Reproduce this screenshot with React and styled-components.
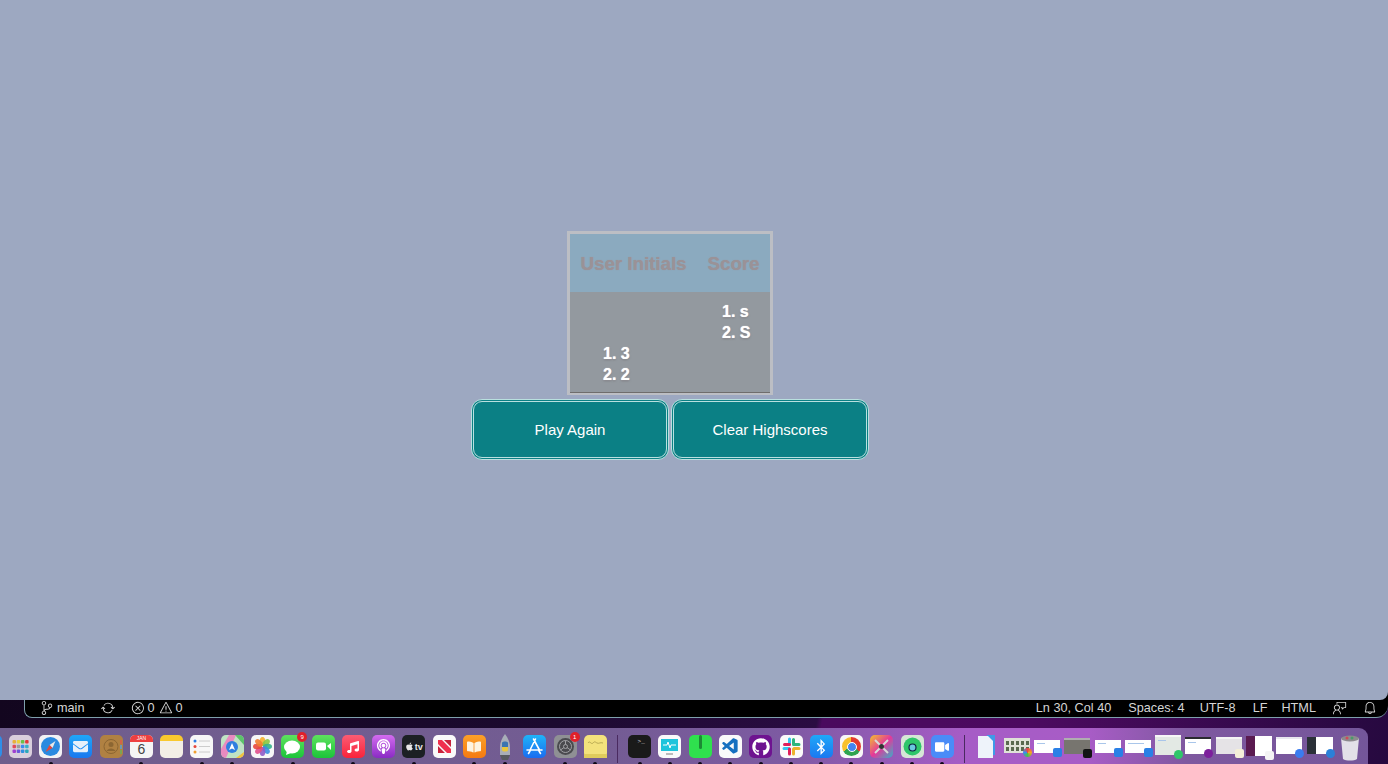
import React from 'react';
import styled, { createGlobalStyle } from 'styled-components';
import { VscSourceControl, VscSync, VscError, VscWarning, VscFeedback, VscBell, VscVscode } from 'react-icons/vsc';
import { FaGithub, FaBluetoothB, FaVideo, FaPodcast, FaApple, FaMusic, FaBookOpen, FaEnvelope } from 'react-icons/fa';

const GlobalStyle = createGlobalStyle`
html, body {
  margin: 0;
  height: 100%;
  overflow: hidden;
  background: #000;
  font-family: "Liberation Sans", Arial, sans-serif;
}
`
const Screen = styled.div`
display: flex;
flex-direction: column;
width: 1388px;
height: 764px;
overflow: hidden;
`
const Stage = styled.main`
display: flex;
flex-direction: column;
align-items: center;
flex: none;
box-sizing: border-box;
height: 700px;
padding: 231px 48px 0 0;
border-radius: 0 0 8px 0;
background: #9da8c1;
`
const Card = styled.div`
box-sizing: border-box;
width: 206px;
height: 164px;
margin-bottom: 4px;
border: 3px solid #bcbec4;
background: #93999f;
`
const ScoreHead = styled.div`
display: grid;
grid-template-columns: 127px 73px;
align-items: center;
box-sizing: border-box;
height: 58px;
padding-top: 2px;
background: #8baabf;
`
const HeadCell = styled.h3`
margin: 0;
font-size: 18.72px;
font-weight: bold;
text-align: center;
color: #9a9297;
text-shadow: 0 0 1px #9a9297;
`
const ScoreBody = styled.div`
display: grid;
grid-template-columns: 127px 73px;
align-content: start;
row-gap: 1px;
box-sizing: border-box;
height: 101px;
padding-top: 10px;
border-bottom: 1px solid #6f6d6c;
`
const ScoreList = styled.ol`
grid-column: ${p => p.$column};
margin: 0;
padding: 0 0 0 ${p => p.$indent}px;
list-style-position: inside;
font-size: 16px;
font-weight: bold;
line-height: 20.6px;
color: #fff;
text-shadow: 0 0 1px #fff, 0 1px 2px #77757a;
`
const ButtonRow = styled.div`
display: flex;
gap: 2px;
`
const ActionButton = styled.button`
box-sizing: border-box;
width: 198px;
height: 61px;
border: 3px double #b9e0df;
border-radius: 11px;
background: #0b8085;
color: #fff;
font-family: inherit;
font-size: 15px;
`
const Footer = styled.div`
display: flex;
flex-direction: column;
flex: 1;
background: linear-gradient(102deg, #13061f 0, #1c0a30 40%, #2a0c42 58.6%, #4a0a5e 59%, #4c0a60 74%, #26093f 100%);
`
const StatusBar = styled.footer`
display: flex;
justify-content: space-between;
align-items: center;
flex: none;
box-sizing: border-box;
height: 18px;
margin-left: 24px;
padding: 0 11px 1px 15px;
border: solid #7ea0ac;
border-width: 0 0 1px 1px;
border-radius: 0 0 12px 8px;
background: #000;
color: #d6d6d6;
font-size: 12.7px;
`
const StatusGroup = styled.div`
display: flex;
align-items: center;
`
const StatusItem = styled.span`
display: inline-flex;
align-items: center;
gap: ${p => p.$gap || 3}px;
margin-left: ${p => p.$left || 0}px;
white-space: nowrap;
svg {
  width: 14px;
  height: 14px;
}
`
const Dock = styled.nav`
display: flex;
flex: 1;
width: 1393px;
margin: 10px 0 0 -25px;
padding-top: 7px;
box-sizing: border-box;
border-radius: 0 9px 0 0;
background: linear-gradient(90deg, #6f5e8c 0, #735c93 45%, #7d5aa2 58%, #a65cc6 71%, #a85cc6 80%, #7e589f 87%, #74569a 100%);
`
const Cell = styled.div`
position: relative;
display: flex;
justify-content: center;
flex: none;
width: 30.28px;
height: 29px;
`
const RunDot = styled.i`
position: absolute;
left: 13px;
bottom: 0;
width: 4px;
height: 2px;
border-radius: 2px 2px 0 0;
background: #0c0614;
`
const Separator = styled.div`
flex: none;
width: 1px;
height: 28px;
margin: 0 6.5px;
background: #4a2a60;
`
const Tile = styled.div`
position: relative;
display: flex;
align-items: center;
justify-content: center;
width: 23px;
height: 23px;
border-radius: 5px;
overflow: ${p => p.$clip ? 'hidden' : 'visible'};
background: ${p => p.$bg};
color: ${p => p.$fg || '#fff'};
font-size: ${p => p.$size || 13}px;
svg {
  display: block;
}
`
const Badge = styled.span`
position: absolute;
top: -3px;
right: -3px;
width: 10px;
height: 10px;
border-radius: 50%;
background: #e0202a;
color: #fff;
font-size: 6px;
line-height: 10px;
text-align: center;
`
const CalMonth = styled.div`
width: 100%;
height: 7px;
background: #ee4040;
color: #fff;
font-size: 5px;
line-height: 7px;
text-align: center;
`
const CalDay = styled.div`
color: #444;
font-size: 14px;
line-height: 15px;
text-align: center;
`
const CalendarFace = styled.div`
width: 100%;
height: 100%;
`
const TvMark = styled.span`
display: flex;
align-items: center;
gap: 1px;
font-size: 9px;
font-weight: bold;
color: #e8e8e8;
`
const Prompt = styled.span`
align-self: flex-start;
margin: 3px 0 0 3px;
color: #ddd;
font-family: "Liberation Mono", monospace;
font-size: 6px;
`
const Ring = styled.div`
width: 19px;
height: 19px;
border-radius: 50%;
background: conic-gradient(#e33b2e 0 120deg, #2fa44f 120deg 240deg, #f8c12d 240deg 360deg);
display: flex;
align-items: center;
justify-content: center;
&::after {
  content: "";
  width: 8px;
  height: 8px;
  border: 1px solid #fff;
  border-radius: 50%;
  background: #4285f0;
}
`
const Thumb = styled.div`
position: relative;
align-self: flex-start;
display: flex;
flex-direction: ${p => p.$side ? 'row' : 'column'};
width: 26px;
height: ${p => p.$h}px;
margin-top: ${p => p.$top}px;
background: ${p => p.$bg};
`
const ThumbBadge = styled.div`
position: absolute;
right: -2px;
bottom: -4px;
width: 9px;
height: 9px;
border-radius: ${p => p.$round ? '50%' : '2px'};
background: ${p => p.$bg};
`
const ThumbBar = styled.div`
flex: none;
height: ${p => p.$h || 2}px;
background: ${p => p.$bg};
`
const ThumbSide = styled.div`
flex: none;
width: ${p => p.$w}px;
background: ${p => p.$bg};
`
const ThumbLine = styled.div`
height: ${p => p.$h || 1}px;
width: ${p => p.$w || 8}px;
margin: ${p => p.$m || '3px 0 0 3px'};
background: ${p => p.$bg || '#a9c6ea'};
`
const PhotoGrid = styled.div`
display: grid;
grid-template-columns: repeat(5, 3px);
gap: 2px 2px;
padding: 3px 2px;
`
const PhotoCell = styled.i`
height: 4px;
background: #5a6a50;
`
const Svg = ({ children }) => <svg width="23" height="23" viewBox="0 0 23 23">{children}</svg>

const launchDots = ['#e8b13a','#e8d23e','#6ac14a','#e33a3a','#e04a5a','#9a9a9a','#3b8df0','#3ab0c8','#a040d0','#6a58d8','#2f8fe0','#2aa8b8']

const tiles = [
  { node: <Tile $bg="#2f8ee8" /> },
  { node: <Tile $bg="#d9cfdc"><Svg>{launchDots.map((c, i) => <rect key={i} x={3.500 + (i % 4) * 4.200} y={5 + Math.floor(i / 4) * 4.700} width="3.500" height="3.500" rx="1" fill={c} />)}</Svg></Tile> },
  { dot: true, node: <Tile $bg="#f2f2f4"><Svg><circle cx="11.500" cy="11.500" r="9.500" fill="#2a8ae0" /><path d="M16.500 6l-6 4 3 3z" fill="#e8e8e8" /><path d="M6.500 17l4-7 3 3z" fill="#e5483c" /></Svg></Tile> },
  { node: <Tile $bg="linear-gradient(#1fa6f8,#1a78ee)" $fg="#e6f0fa" $size={15}><FaEnvelope /></Tile> },
  { node: <Tile $bg="#b08142"><Svg><circle cx="11" cy="11.500" r="7" fill="none" stroke="#8c6632" /><circle cx="11" cy="9.500" r="2.500" fill="#8c6632" /><path d="M6.500 16c1.500-3.500 7.500-3.500 9 0z" fill="#8c6632" /><path d="M21 5v4" stroke="#e05a4a" strokeWidth="1.500" /><path d="M21 10v4" stroke="#5aa0d8" strokeWidth="1.500" /><path d="M21 15v4" stroke="#6ab05a" strokeWidth="1.500" /></Svg></Tile> },
  { dot: true, node: <Tile $bg="#f5f5f5" $clip><CalendarFace><CalMonth>JAN</CalMonth><CalDay>6</CalDay></CalendarFace></Tile> },
  { node: <Tile $bg="linear-gradient(#f9c92e 0 28%,#f3efe6 28%)" /> },
  { dot: true, node: <Tile $bg="#f7f7f7"><Svg><circle cx="5" cy="6" r="1.500" fill="#2c7fe6" /><circle cx="5" cy="11.500" r="1.500" fill="#e5483c" /><circle cx="5" cy="17" r="1.500" fill="#f0a030" /><path d="M9 6h11M9 11.500h11M9 17h11" stroke="#ccc" /></Svg></Tile> },
  { dot: true, node: <Tile $bg="#bfe3c4" $clip><Svg><path d="M0 14L8 0h7L5 23H0z" fill="#e88ac0" /><path d="M14 0h9v10z" fill="#5cc46a" /><circle cx="11" cy="12" r="6" fill="#2f7fe0" /><path d="M11 8l3 7-3-1.500L8 15z" fill="#fff" /><path d="M15 23l8-6v6z" fill="#f3c33c" /></Svg></Tile> },
  { node: <Tile $bg="#f7f7f7"><Svg>{['#f6b02c','#8cc63f','#34b38a','#3a8fe0','#8e5bc8','#e0508c','#e8483c','#f08030'].map((c, i) => <ellipse key={i} cx="11.500" cy="6.500" rx="2.800" ry="4.500" fill={c} opacity=".9" transform={`rotate(${i * 45} 11.500 11.500)`} />)}</Svg></Tile> },
  { dot: true, node: <Tile $bg="linear-gradient(#5ee25e,#1cc43a)"><Svg><ellipse cx="11" cy="12" rx="8" ry="6.500" fill="#fff" /><path d="M6 16l-1 4 5-2z" fill="#fff" /></Svg><Badge>9</Badge></Tile> },
  { node: <Tile $bg="linear-gradient(#5ee25e,#1cc43a)"><Svg><rect x="4" y="7.500" width="10" height="8" rx="2" fill="#fff" /><path d="M15 11l4-3v7z" fill="#fff" /></Svg></Tile> },
  { dot: true, node: <Tile $bg="linear-gradient(#fb5c74,#fa233b)" $size={12}><FaMusic /></Tile> },
  { node: <Tile $bg="linear-gradient(#d36cf0,#8a2bc4)" $size={15}><FaPodcast /></Tile> },
  { dot: true, node: <Tile $bg="#1c2024"><TvMark><FaApple />tv</TvMark></Tile> },
  { node: <Tile $bg="#fafafa"><Svg><path d="M5 5h4l9 9v4h-4L5 9z" fill="#f0304e" /><path d="M5 11l7 7H5zM11 5h7v7z" fill="#c8233c" /></Svg></Tile> },
  { dot: true, node: <Tile $bg="linear-gradient(#fca028,#f57a10)" $size={14} $fg="#fdf3e0"><FaBookOpen /></Tile> },
  { dot: true, node: <Tile $bg="transparent"><svg width="14" height="26" viewBox="0 0 14 26"><path d="M7 0c3 4 5 8 5 13v8H2v-8C2 8 4 4 7 0z" fill="#a8aeb8" /><path d="M4 9c0-2 6-2 6 0v4H4z" fill="#3a75b0" /><path d="M4 13h6v3c0 2-6 2-6 0z" fill="#e8c63c" /><path d="M2 21h10l-2 5H4z" fill="#575a60" /></svg></Tile> },
  { node: <Tile $bg="linear-gradient(#1fb4f8,#1a6cf0)"><Svg><path d="M12.500 4L7 15M10.500 4l6 11M4 15h15M5.500 18.500L7 16M17.500 18.500L16 16" stroke="#fff" strokeWidth="1.600" strokeLinecap="round" fill="none" /></Svg></Tile> },
  { dot: true, node: <Tile $bg="#8f9094"><Svg><circle cx="11.500" cy="11.500" r="8.500" fill="#4a4a4e" /><circle cx="11.500" cy="11.500" r="6" fill="none" stroke="#a0a0a4" /><circle cx="11.500" cy="11.500" r="2" fill="none" stroke="#a0a0a4" /><path d="M11.500 5.500v4M6.500 15l3.500-2.500M16.500 15L13 12.500" stroke="#a0a0a4" /></Svg><Badge>1</Badge></Tile> },
  { dot: true, node: <Tile $bg="#f3e27c"><Svg><path d="M4 8c2-3 3 2 5 0s2-1 4 0 3-1 6 0" stroke="#a89a48" fill="none" strokeWidth=".8" /><path d="M0 19h23v4H0z" fill="#e0cc5c" /></Svg></Tile> },
  { sep: true },
  { dot: true, node: <Tile $bg="#1a1a1a"><Prompt>&gt;_</Prompt></Tile> },
  { dot: true, node: <Tile $bg="#fafafa"><Svg><rect x="3" y="4" width="17" height="12" fill="#1fc4dc" /><path d="M5 10h4l1-3 2 6 1-3h5" stroke="#fff" fill="none" /><path d="M8 19h7" stroke="#bbb" strokeWidth="2" /></Svg></Tile> },
  { dot: true, node: <Tile $bg="#2fe04e"><Svg><rect x="10" y="0" width="3" height="14" rx="1.500" fill="#1c8a34" /></Svg></Tile> },
  { dot: true, node: <Tile $bg="#fafafa" $fg="#1670c0" $size={19}><VscVscode /></Tile> },
  { dot: true, node: <Tile $bg="#6e1390" $size={18}><FaGithub /></Tile> },
  { dot: true, node: <Tile $bg="#fafafa"><Svg><path d="M9.500 4v5M4 13.500h5" stroke="#36c5f0" strokeWidth="3" strokeLinecap="round" /><path d="M13.500 4.500v5M14 9.500h5" stroke="#2eb67d" strokeWidth="3" strokeLinecap="round" /><path d="M13.500 19v-5M19 13.500h-5" stroke="#ecb22e" strokeWidth="3" strokeLinecap="round" /><path d="M9.500 19v-5M4.500 9.500h5" stroke="#e01e5a" strokeWidth="3" strokeLinecap="round" /></Svg></Tile> },
  { dot: true, node: <Tile $bg="linear-gradient(#1fa8f8,#1a78f0)" $size={16}><FaBluetoothB /></Tile> },
  { dot: true, node: <Tile $bg="#f7f7f7"><Ring /></Tile> },
  { dot: true, node: <Tile $bg="linear-gradient(135deg,#f3c12c,#e4389a 50%,#38b0c8)" ><Svg><path d="M5 5l13 13M18 5L5 18" stroke="#d8d8d8" strokeWidth="2" /><circle cx="11.500" cy="11.500" r="2.500" fill="#333" /></Svg></Tile> },
  { dot: true, node: <Tile $bg="#d6e6d6"><Svg><circle cx="11.500" cy="11.500" r="9" fill="#2fc66a" /><circle cx="11.500" cy="12.500" r="3.500" fill="#6ac8e0" stroke="#124" strokeWidth="1.200" /></Svg></Tile> },
  { dot: true, node: <Tile $bg="#4a8cf8" $size={14}><FaVideo /></Tile> },
  { sep: true },
  { node: <Tile $bg="transparent"><svg width="23" height="26" viewBox="0 0 23 26"><path d="M12 1h8v20h-8z" fill="#3f9ae8" /><path d="M3 2h10l5 5v17H3z" fill="#eef3fa" /></svg></Tile> },
]

const thumbs = [
  { h: 15, top: 3, bg: '#dfe2d8', badge: 'conic-gradient(#e44,#f6a623,#4ac14a,#3b8df0,#e44)', round: true, photos: true },
  { h: 13, top: 5, bg: '#fff', badge: '#2a80e6', line: true },
  { h: 16, top: 3, bg: '#77756f', bar: '#b0aeb0', badge: '#141414' },
  { h: 13, top: 5, bg: '#fff', badge: '#2a80e6', line: true },
  { h: 13, top: 5, bg: '#fff', badge: '#2a80e6', line: true, wide: true },
  { h: 20, top: 0, bg: '#e3e9e4', bar: '#f7f7f7', badge: '#2fc66a', round: true, line: true },
  { h: 17, top: 2, bg: '#fff', bar: '#2a2a30', badge: '#7d1f9c', round: true, line: true },
  { h: 17, top: 2, bg: '#e5e3e6', bar: '#f4f4f4', badge: '#f4efd8' },
  { h: 20, top: 1, bg: '#fff', side: '#5a1a50', badge: '#f4f4f4' },
  { h: 17, top: 2, bg: '#fff', bar: '#e8e8ee', badge: '#3a7cf0', round: true },
  { h: 17, top: 2, bg: '#fff', side: '#2a3038', badge: '#2a80d8', round: true },
]

const TrashCan = () => (
  <svg width="20" height="27" viewBox="0 0 20 27">
    <path d="M1 3h18l-2 21c-3 2-11 2-14 0z" fill="#e2e0e8" />
    <ellipse cx="10" cy="3.500" rx="9" ry="3" fill="#8c8a8e" />
    <circle cx="7" cy="3" r="1.500" fill="#d04a5a" />
    <circle cx="12" cy="3" r="1.500" fill="#4a9a6a" />
  </svg>
)

function ScoreCard() {
  return (
    <Card>
      <ScoreHead>
        <HeadCell>User Initials</HeadCell>
        <HeadCell>Score</HeadCell>
      </ScoreHead>
      <ScoreBody>
        <ScoreList $column={2} $indent={25}>
          <li>s</li>
          <li>S</li>
        </ScoreList>
        <ScoreList $column={1} $indent={33}>
          <li>3</li>
          <li>2</li>
        </ScoreList>
      </ScoreBody>
    </Card>
  )
}

function Status() {
  return (
    <StatusBar>
      <StatusGroup>
        <StatusItem $gap={3}><VscSourceControl />main</StatusItem>
        <StatusItem $left={16}><VscSync /></StatusItem>
        <StatusItem $left={16} $gap={3}><VscError />0</StatusItem>
        <StatusItem $left={4} $gap={3}><VscWarning />0</StatusItem>
      </StatusGroup>
      <StatusGroup>
        <StatusItem>Ln 30, Col 40</StatusItem>
        <StatusItem $left={17}>Spaces: 4</StatusItem>
        <StatusItem $left={15}>UTF-8</StatusItem>
        <StatusItem $left={17}>LF</StatusItem>
        <StatusItem $left={14}>HTML</StatusItem>
        <StatusItem $left={17}><VscFeedback /></StatusItem>
        <StatusItem $left={16}><VscBell /></StatusItem>
      </StatusGroup>
    </StatusBar>
  )
}

function WindowThumb({ t }) {
  return (
    <Thumb $bg={t.bg} $h={t.h} $top={t.top} $side={!!t.side}>
      {t.bar && <ThumbBar $bg={t.bar} />}
      {t.side && <ThumbSide $w={9} $bg={t.side} />}
      {t.photos && (
        <PhotoGrid>
          {Array.from({ length: 10 }).map((_, i) => <PhotoCell key={i} />)}
        </PhotoGrid>
      )}
      {t.line && <ThumbLine $w={t.wide ? 16 : 8} />}
      <ThumbBadge $bg={t.badge} $round={t.round} />
    </Thumb>
  )
}

function DockBar() {
  return (
    <Dock>
      {tiles.map((t, i) => t.sep ? <Separator key={i} /> : (
        <Cell key={i}>{t.node}{t.dot && <RunDot />}</Cell>
      ))}
      {thumbs.map((t, i) => (
        <Cell key={`t${i}`}><WindowThumb t={t} /></Cell>
      ))}
      <Cell><TrashCan /></Cell>
    </Dock>
  )
}

function App() {
  return (
    <Screen>
      <GlobalStyle />
      <Stage>
        <ScoreCard />
        <ButtonRow>
          <ActionButton>Play Again</ActionButton>
          <ActionButton>Clear Highscores</ActionButton>
        </ButtonRow>
      </Stage>
      <Footer>
        <Status />
        <DockBar />
      </Footer>
    </Screen>
  )
}

export default App;
